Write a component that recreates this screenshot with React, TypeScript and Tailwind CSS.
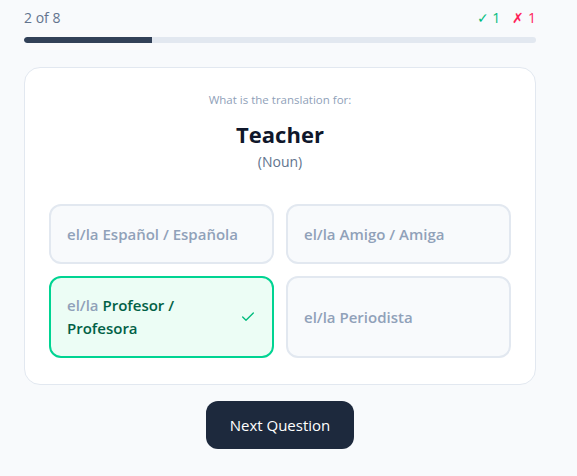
import { Check } from "lucide-react";

const options = [
  { id: 1, text: "Español / Española" },
  { id: 2, text: "Amigo / Amiga" },
  { id: 3, text: "Profesor / Profesora", correct: true },
  { id: 4, text: "Periodista" },
];

export default function App() {
  return (
    <div className="min-h-screen bg-[#f8fafc] font-['Open_Sans','Noto_Sans',sans-serif]">
      <div className="w-[512px] ml-6 pt-2">
        {/* Progress */}
        <div className="flex items-center justify-between text-sm leading-5 text-slate-500">
          <span>2 of 8</span>
          <div className="flex items-center gap-3">
            <span className="text-emerald-500">✓ 1</span>
            <span className="text-rose-500">✗ 1</span>
          </div>
        </div>
        <div className="mt-[9px] h-1.5 w-full rounded-full bg-slate-200 overflow-hidden">
          <div className="h-full w-1/4 rounded-l-full bg-slate-700" />
        </div>

        {/* Card */}
        <div className="mt-6 rounded-2xl border border-slate-200 bg-white px-6 pt-6 pb-[26px]">
          <p className="text-center text-[11.5px] leading-4 text-slate-400">What is the translation for:</p>
          <h2 className="mt-2.5 text-center text-[22px] leading-8 font-bold text-slate-900">Teacher</h2>
          <p className="mt-0.5 text-center text-sm leading-5 text-slate-500">(Noun)</p>

          <div className="mt-8 grid grid-cols-2 gap-3">
            {options.map((o) => (
              <button
                key={o.id}
                className={
                  o.correct
                    ? "flex min-h-[60px] items-center justify-between gap-3 rounded-xl border-2 border-emerald-400 bg-emerald-50 px-4 py-4 text-left text-[15px] leading-[23px] font-semibold"
                    : "flex min-h-[60px] items-center justify-between gap-3 rounded-xl border-2 border-slate-200 bg-slate-50 px-4 py-4 text-left text-[15px] leading-[23px] font-semibold"
                }
              >
                <span>
                  <span className="text-slate-400">el/la </span>
                  <span className={o.correct ? "text-emerald-800" : "text-slate-400"}>{o.text}</span>
                </span>
                {o.correct && <Check className="h-4 w-4 shrink-0 text-emerald-500" strokeWidth={2} />}
              </button>
            ))}
          </div>
        </div>

        <div className="mt-4 flex justify-center">
          <button className="rounded-xl bg-slate-800 px-6 py-3 text-[15px] leading-6 text-white">Next Question</button>
        </div>
      </div>
    </div>
  );
}
